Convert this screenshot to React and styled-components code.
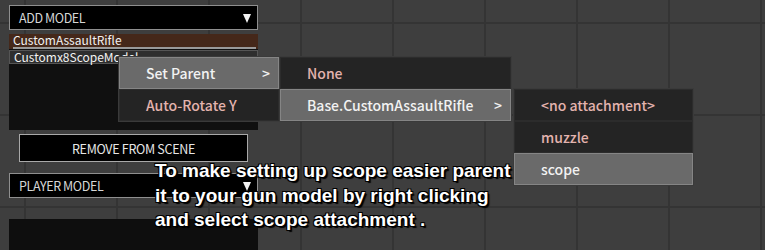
import React from 'react';
import styled, { createGlobalStyle } from 'styled-components';

const GlobalStyle = createGlobalStyle`
  html, body {
    margin: 0;
    padding: 0;
    background: #3d3d3d;
  }
  body {
    font-family: 'Noto Sans CJK KR', 'Noto Sans', sans-serif;
  }
`;

const App = () => {
  return (
    <>
      <GlobalStyle />
      <Canvas>
        <Sidebar>
          <Dropdown>
            <DropdownLabel>ADD MODEL</DropdownLabel>
            <Caret />
          </Dropdown>
          <ModelList>
            <ModelItem active>
              <ItemText>CustomAssaultRifle</ItemText>
              <ItemBar />
            </ModelItem>
            <ModelItem hovered>
              <ItemText>Customx8ScopeModel</ItemText>
            </ModelItem>
          </ModelList>
          <RemoveButton>REMOVE FROM SCENE</RemoveButton>
          <Dropdown spaced>
            <DropdownLabel>PLAYER MODEL</DropdownLabel>
            <Caret />
          </Dropdown>
          <EmptyPanel />
        </Sidebar>

        <Menu left={119} top={57} width={160}>
          <MenuItem selected>
            <span>Set Parent</span>
            <Arrow>&gt;</Arrow>
          </MenuItem>
          <MenuItem pink>Auto-Rotate Y</MenuItem>
        </Menu>

        <Menu left={280} top={57} width={231}>
          <MenuItem pink>None</MenuItem>
          <MenuItem selected>
            <span>Base.CustomAssaultRifle</span>
            <Arrow>&gt;</Arrow>
          </MenuItem>
        </Menu>

        <Menu left={514} top={89} width={179}>
          <MenuItem pink>&lt;no attachment&gt;</MenuItem>
          <MenuItem pink>muzzle</MenuItem>
          <MenuItem selected>scope</MenuItem>
        </Menu>

        <Hint>
          To make setting up scope easier parent
          <br />
          it to your gun model by right clicking
          <br />
          and select scope attachment .
        </Hint>
      </Canvas>
    </>
  );
};

export default App;

const Canvas = styled.div`
  position: relative;
  width: 765px;
  height: 250px;
  overflow: hidden;
  background-color: #3e3e3e;
  background-image: linear-gradient(to right, #343434 2px, transparent 2px),
    linear-gradient(to bottom, #343434 2px, transparent 2px);
  background-size: 92px 92px;
  background-position: 24px 22px;
`;

const Sidebar = styled.div`
  display: flex;
  flex-direction: column;
  width: 249px;
  height: 100%;
  margin-left: 9px;
  padding-top: 5px;
  box-sizing: border-box;
`;

const Dropdown = styled.div`
  display: flex;
  align-items: center;
  justify-content: space-between;
  height: 25px;
  margin-top: ${(props) => (props.spaced ? '11px' : '0')};
  padding: 0 6px 0 9px;
  box-sizing: border-box;
  background: #000;
  border: 1px solid #8f8f8f;
`;

const DropdownLabel = styled.span`
  font-size: 12.5px;
  color: #d6d6d6;
  letter-spacing: -0.4px;
`;

const Caret = styled.span`
  width: 0;
  height: 0;
  border-left: 4px solid transparent;
  border-right: 4px solid transparent;
  border-top: 9px solid #f4f4f4;
  margin-top: 2px;
`;

const ModelList = styled.div`
  display: flex;
  flex-direction: column;
  gap: 1px;
  height: 96px;
  margin-top: 4px;
  background: #101010;
`;

const ModelItem = styled.div`
  position: relative;
  flex: none;
  height: ${(props) => (props.active ? '15px' : '14px')};
  padding-left: 4px;
  box-sizing: border-box;
  background: ${(props) => (props.active ? '#45281a' : '#2e2e2e')};
  border: ${(props) => (props.hovered ? '1px solid #555' : 'none')};
`;

const ItemText = styled.div`
  font-size: 12px;
  line-height: 11px;
  color: #f2f2f2;
  white-space: nowrap;
`;

const ItemBar = styled.div`
  position: absolute;
  left: 4px;
  right: 2px;
  bottom: 0;
  height: 2px;
  background: #9a9a9a;
`;

const RemoveButton = styled.div`
  display: flex;
  align-items: center;
  justify-content: center;
  height: 28px;
  margin: 4px 10px 0;
  box-sizing: border-box;
  background: #000;
  border: 1px solid #a9a9a9;
  font-size: 12.5px;
  color: #e6e6e6;
  letter-spacing: -0.3px;
`;

const EmptyPanel = styled.div`
  flex: 1;
  margin-top: 21px;
  background: #0e0e0e;
`;

const Menu = styled.div`
  position: absolute;
  left: ${(props) => props.left}px;
  top: ${(props) => props.top}px;
  width: ${(props) => props.width}px;
  display: flex;
  flex-direction: column;
  background: #1f1f1f;
  box-shadow: 0 0 0 1px #3a3a3a;
`;

const MenuItem = styled.div`
  display: flex;
  align-items: center;
  justify-content: space-between;
  height: 32px;
  padding: 0 8px 0 26px;
  box-sizing: border-box;
  font-size: 14px;
  font-weight: 500;
  color: ${(props) => (props.pink ? '#e3b3ae' : '#f2f2f2')};
  background: ${(props) => (props.selected ? '#6a6a6a' : '#242424')};
  border: 1px solid ${(props) => (props.selected ? '#858585' : '#2c2c2c')};
`;

const Arrow = styled.span`
  font-size: 14px;
  color: #f2f2f2;
`;

const Hint = styled.div`
  position: absolute;
  left: 155px;
  top: 159px;
  font-family: 'Liberation Sans', Arial, sans-serif;
  font-weight: bold;
  font-size: 19px;
  line-height: 24.5px;
  color: #fff;
  text-shadow: 1px 1px 0 #000, -1px -1px 0 #000, 1px -1px 0 #000,
    -1px 1px 0 #000, 2px 2px 1px #000;
  white-space: nowrap;
`;
